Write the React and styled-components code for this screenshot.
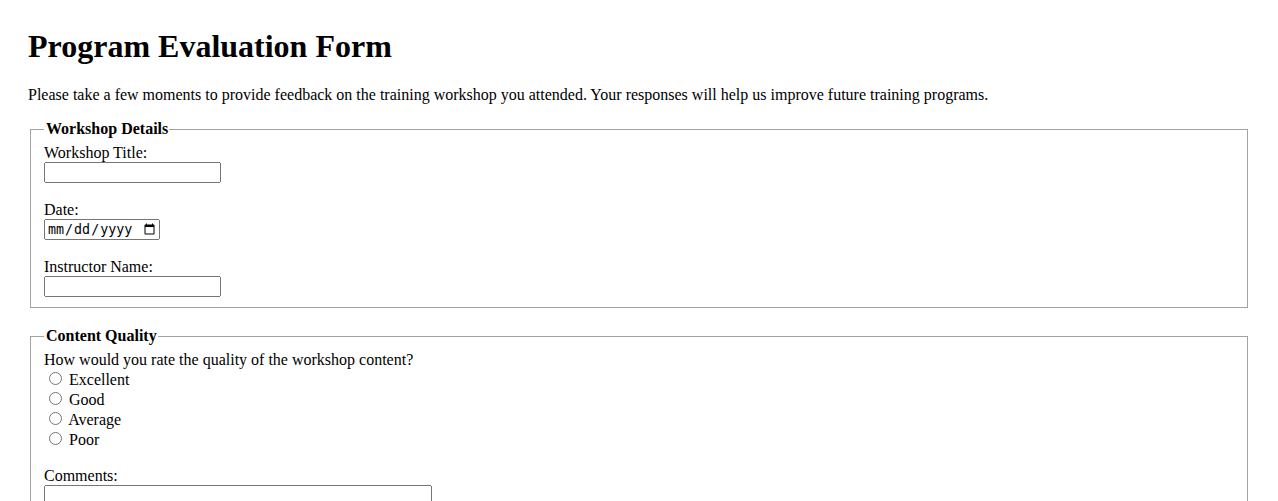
import React from "react";
import styled, { createGlobalStyle } from "styled-components";

const GlobalStyle = createGlobalStyle`
  html, body {
    margin: 0;
    padding: 0;
    background: #ffffff;
  }
  body {
    font-family: "Liberation Serif", "Times New Roman", serif;
    font-size: 16px;
    color: #000000;
  }
`;

const Page = styled.div`
  padding: 28px;
`;

const Title = styled.h1`
  font-size: 32px;
  font-weight: bold;
  margin: 0 0 21px 0;
  line-height: normal;
`;

const Intro = styled.p`
  margin: 0 0 16px 0;
`;

const Section = styled.fieldset`
  margin: 0 2px 19px 2px;
  padding: 6px 13px 10px 13px;
  border: 1px solid #a3a3a3;
  min-inline-size: min-content;
`;

const Legend = styled.legend`
  padding: 0 1px 0 2px;
  font-weight: bold;
`;

const Field = styled.div`
  display: flex;
  flex-direction: column;
  align-items: flex-start;
  margin-bottom: ${(p) => (p.$last ? "0" : "18px")};
`;

const FieldLabel = styled.label`
  display: block;
`;

const TextInput = styled.input`
  box-sizing: border-box;
  width: 177px;
  height: 21px;
`;

const DateInput = styled.input`
  box-sizing: border-box;
  width: 116px;
  height: 21px;
`;

const Question = styled.div``;

const RadioOption = styled.label`
  display: block;
`;

const Radio = styled.input`
  margin: 3px 3px 0 5px;
`;

const Comments = styled.textarea`
  box-sizing: border-box;
  width: 388px;
  height: 60px;
`;

export default function App() {
  return (
    <>
      <GlobalStyle />
      <Page>
        <Title>Program Evaluation Form</Title>
        <Intro>
          Please take a few moments to provide feedback on the training workshop you attended. Your
          responses will help us improve future training programs.
        </Intro>

        <Section>
          <Legend>Workshop Details</Legend>
          <Field>
            <FieldLabel htmlFor="title">Workshop Title:</FieldLabel>
            <TextInput id="title" type="text" />
          </Field>
          <Field>
            <FieldLabel htmlFor="date">Date:</FieldLabel>
            <DateInput id="date" type="date" />
          </Field>
          <Field $last>
            <FieldLabel htmlFor="instructor">Instructor Name:</FieldLabel>
            <TextInput id="instructor" type="text" />
          </Field>
        </Section>

        <Section>
          <Legend>Content Quality</Legend>
          <Field>
            <Question>How would you rate the quality of the workshop content?</Question>
            <div>
              {["Excellent", "Good", "Average", "Poor"].map((v) => (
                <RadioOption key={v}>
                  <Radio type="radio" name="content" value={v.toLowerCase()} /> {v}
                </RadioOption>
              ))}
            </div>
          </Field>
          <Field $last>
            <FieldLabel htmlFor="comments">Comments:</FieldLabel>
            <Comments id="comments" />
          </Field>
        </Section>
      </Page>
    </>
  );
}
